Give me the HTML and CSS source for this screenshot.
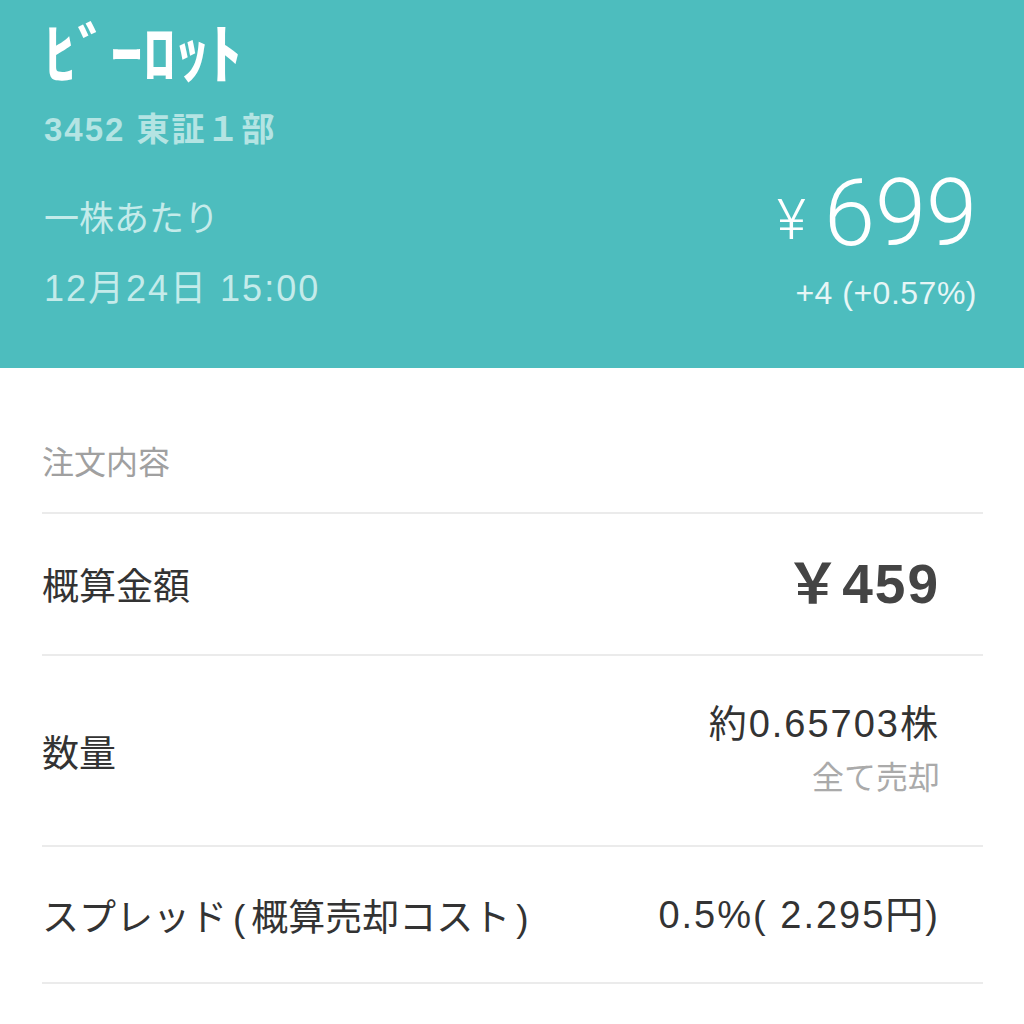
FILE: index.html
```html
<!DOCTYPE html>
<html>
<head>
<meta http-equiv="Content-Type" content="text/html; charset=utf-8"/>
<title>ﾋﾞｰﾛｯﾄ 売却</title>
<link rel="stylesheet" href="styles.css">
</head>
<body>

<div class="stock-header">
  <h1 class="stock-name">ﾋﾞｰﾛｯﾄ</h1>
  <p class="stock-code">3452 東証１部</p>
  <div class="price-row">
    <div class="price-meta">
      <p class="per-share">一株あたり</p>
      <p class="price-time">12月24日 15:00</p>
    </div>
    <div class="price-box">
      <p class="price"><span class="yen">¥</span>699</p>
      <p class="change">+4 (+0.57%)</p>
    </div>
  </div>
</div>

<div class="order">
  <p class="order-title">注文内容</p>

  <div class="order-row row-amount">
    <span class="row-label">概算金額</span>
    <span class="row-value amount">￥459</span>
  </div>

  <div class="order-row row-qty">
    <span class="row-label">数量</span>
    <div class="row-value">
      <div>約0.65703株</div>
      <div class="sub-note">全て売却</div>
    </div>
  </div>

  <div class="order-row row-spread">
    <span class="row-label">スプレッド<span class="paren">(</span>概算売却コスト<span class="paren">)</span></span>
    <span class="row-value">0.5%( 2.295円)</span>
  </div>
</div>

</body>
</html>
```

FILE: styles.css
```css
body {
  margin: 0;
  background-color: white;
  font-family: "Liberation Sans", "Noto Sans CJK JP", sans-serif;
  color: #333;
}

p, h1 {
  margin: 0;
}

/* header */
.stock-header {
  background-color: #4dbdbe;
  height: 368px;
  box-sizing: border-box;
  padding: 10px 47px 0 44px;
}

.stock-name {
  font-family: "Noto Sans CJK JP", sans-serif;
  font-size: 66px;
  font-weight: bold;
  line-height: 78px;
  color: #fff;
}

.stock-code {
  margin-top: 20px;
  font-size: 33px;
  font-weight: bold;
  letter-spacing: 2px;
  line-height: 44px;
  color: #b4e4e3;
}

.price-row {
  display: flex;
  justify-content: space-between;
  align-items: flex-end;
  margin-top: 14px;
}

.per-share {
  font-size: 35px;
  line-height: 48px;
  color: #c4ebea;
}

.price-time {
  margin-top: 22px;
  font-size: 36px;
  letter-spacing: 2px;
  line-height: 48px;
  color: #c4ebea;
}

.price-box {
  text-align: right;
  color: #fff;
}

.price {
  font-family: Roboto, "Liberation Sans", sans-serif;
  font-weight: 300;
  font-size: 92px;
  line-height: 96px;
}

.price .yen {
  font-size: 56px;
  margin-right: 18px;
  vertical-align: 6px;
}

.change {
  margin-top: 5px;
  font-size: 32px;
  letter-spacing: 0.5px;
  line-height: 40px;
  color: #e6f6f6;
}

/* order details */
.order {
  padding: 0 41px 0 42px;
}

.order-title {
  padding-top: 74px;
  height: 70px;
  font-size: 32px;
  line-height: 42px;
  color: #a0a0a0;
  border-bottom: 2px solid #ebebeb;
}

.order-row {
  display: flex;
  justify-content: space-between;
  align-items: center;
  border-bottom: 2px solid #ebebeb;
  box-sizing: border-box;
}

.row-amount { height: 142px; }
.row-qty    { height: 191px; }
.row-spread { height: 137px; }

.row-label {
  font-size: 37px;
  color: #333;
}

.row-label .paren {
  margin: 0 6px;
}

.row-value {
  text-align: right;
  padding-right: 43px;
  font-size: 38px;
  letter-spacing: 2px;
  line-height: 54px;
  color: #333;
}

.amount {
  font-size: 55px;
  font-weight: bold;
  color: #444;
}

.sub-note {
  font-size: 32px;
  letter-spacing: 0;
  color: #aaa;
}
```
